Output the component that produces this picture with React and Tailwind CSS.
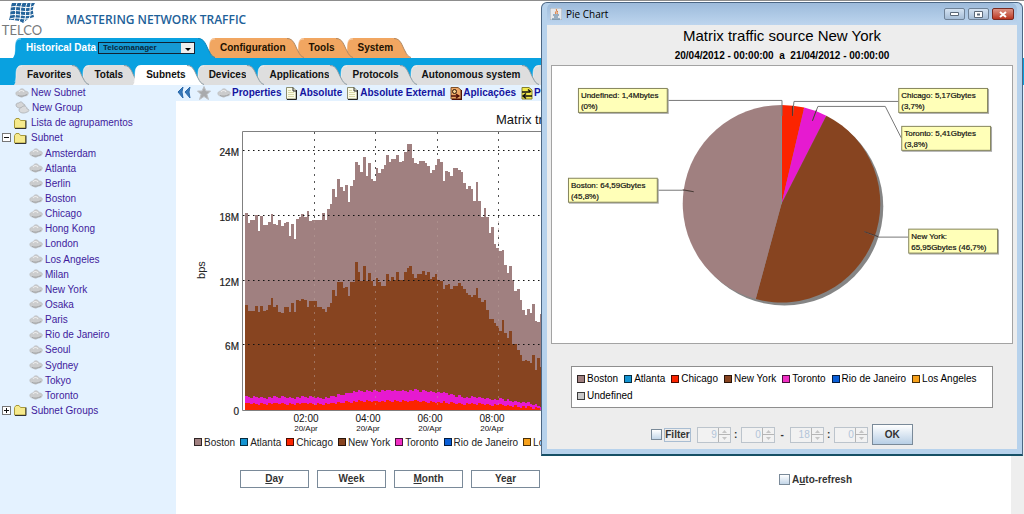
import { useState } from "react";

const menuTabs = [
  { label: "Configuration", z: "z-30" },
  { label: "Tools", z: "z-20" },
  { label: "System", z: "z-10" },
];

const sectionTabs = [
  { label: "Favorites", z: "z-30" },
  { label: "Totals", z: "z-20" },
  { label: "Subnets", z: "z-40" },
  { label: "Devices", z: "z-30" },
  { label: "Applications", z: "z-20" },
  { label: "Protocols", z: "z-10" },
  { label: "Autonomous system", z: "z-0" },
];

const subnets = [
  "Amsterdam", "Atlanta", "Berlin", "Boston", "Chicago", "Hong Kong", "London", "Los Angeles", "Milan",
  "New York", "Osaka", "Paris", "Rio de Janeiro", "Seoul", "Sydney", "Tokyo", "Toronto",
];

const series = [
  { name: "Boston", color: "bg-[#a08080]" },
  { name: "Atlanta", color: "bg-[#1494d2]" },
  { name: "Chicago", color: "bg-[#fb2400]" },
  { name: "New York", color: "bg-[#874420]" },
  { name: "Toronto", color: "bg-[#f02fc4]" },
  { name: "Rio de Janeiro", color: "bg-[#0a5fd8]" },
  { name: "Los Angeles", color: "bg-[#f7a11b]" },
];

// one sample every 5 minutes, measured down from the top of the plot
const bostonSamples = [
  279, 308, 300, 299, 285, 332, 288, 315, 315, 305, 282, 312, 315, 300, 318, 308, 305, 348, 312, 356,
  297, 292, 282, 290, 273, 303, 300, 299, 299, 299, 279, 300, 268, 252, 208, 232, 177, 200, 213, 195,
  247, 198, 180, 126, 136, 157, 110, 167, 128, 178, 183, 143, 160, 147, 135, 104, 126, 118, 116, 104,
  126, 123, 96, 72, 72, 113, 130, 131, 123, 123, 130, 138, 158, 150, 135, 118, 126, 183, 153, 157,
  167, 144, 144, 149, 155, 190, 208, 198, 206, 242, 185, 242, 290, 265, 292, 340, 320, 372, 385, 392,
  390, 435, 458, 438, 480, 513, 508, 540, 570, 585, 567, 578, 552, 603, 605, 582,
];

const newYorkSamples = [
  555, 572, 573, 573, 558, 575, 557, 573, 571, 555, 533, 562, 556, 575, 578, 560, 560, 577, 548, 577,
  540, 542, 537, 540, 560, 543, 543, 543, 560, 560, 566, 576, 560, 549, 510, 527, 487, 487, 503, 500,
  527, 487, 487, 425, 455, 482, 438, 482, 460, 482, 497, 475, 487, 497, 497, 461, 482, 470, 479, 457,
  479, 479, 455, 445, 437, 461, 475, 463, 463, 452, 465, 457, 478, 472, 463, 480, 482, 508, 495, 492,
  506, 497, 497, 488, 497, 508, 520, 524, 532, 524, 503, 533, 545, 540, 570, 598, 598, 608, 618, 634,
  600, 640, 655, 632, 672, 673, 690, 705, 722, 720, 722, 728, 705, 750, 715, 740,
];

const torontoCurve = [[0, 832], [33, 832], [42, 814], [65, 811], [75, 816], [84, 830], [100, 839], [107, 846], [115, 858]];
const chicagoCurve = [[0, 851], [33, 851], [42, 844], [65, 843], [75, 847], [84, 851], [100, 855], [107, 860], [115, 866]];

const interpolate = (curve) =>
  bostonSamples.map((_, i) => {
    const next = Math.max(1, curve.findIndex(([x]) => x >= i));
    const [x0, y0] = curve[next - 1];
    const [x1, y1] = curve[next];
    return y0 + ((y1 - y0) * (i - x0)) / (x1 - x0) + (((i * 37) % 11) - 5) * 0.7;
  });

const areaPath = (samples) => {
  let d = "M69 309";
  samples.forEach((v, i) => {
    const y = Math.round(19 + v / 3);
    d += `V${y}H${(69 + (i + 1) * 2.565).toFixed(1)}`;
  });
  return d + "V309Z";
};

const LeftCap = ({ fill }) => (
  <svg width="8" height="20" viewBox="0 0 8 20" className="block shrink-0">
    <path d="M0 20C2 17 2 14 2 9C2 3 4 0 8 0V20Z" fill={fill} />
    <path d="M1 17C2 14 2 12 2 9C2 3 4 1 8 1" fill="none" stroke="#fff" strokeOpacity="0.5" />
  </svg>
);

const RightCap = ({ fill, edge }) => (
  <svg width="18" height="20" viewBox="0 0 18 20" className="block shrink-0">
    <path d="M0 0C8 0 9 8 12 13C14 17 15 19 18 20H0Z" fill={fill} />
    <path d="M1 0.5C8 0.5 9 8 12 13C14 17 15 18.5 18 19.5" fill="none" stroke={edge} />
  </svg>
);

const Cloud = () => (
  <svg width="14" height="10" viewBox="0 0 14 10" className="shrink-0">
    <path d="M1 6C0 4 3 3 4 3C5 0 9 0 10 3C13 3 14 5 13 6C13 8 10 8 9 8C7 10 5 9 4 8C2 8 1 7 1 6Z" fill="#cbcccd" stroke="#b8babc" strokeWidth="0.6" />
    <path d="M4 4C5 2 8 2 9 4" fill="none" stroke="#ececec" strokeWidth="1.2" />
    <path d="M3 7.500C5 8.500 9 8.500 12 6.500" fill="none" stroke="#9fa1a3" />
  </svg>
);

const Clouds = () => (
  <svg width="15" height="13" viewBox="0 0 15 13" className="shrink-0">
    <path d="M1 4C1 2 3 2 4 2C5 0 8 1 8 3C11 3 10 6 8 6C6 8 1 7 1 4Z" fill="#d4d5d6" stroke="#a5a8ab" strokeWidth="0.7" />
    <path d="M4 9C4 7 6 7 7 6C9 4 12 5 12 8C15 8 14 11 12 11C9 13 4 12 4 9Z" fill="#d9dadb" stroke="#a5a8ab" strokeWidth="0.7" />
  </svg>
);

const Folder = () => (
  <svg width="13" height="12" viewBox="0 0 13 12" className="shrink-0">
    <path d="M0.5 3.5L2 1.5H5L6.5 3.5H11.5V11H0.5Z" fill="#f6ea8c" stroke="#a89a3a" />
    <path d="M12 3.5V11.5H1" fill="none" stroke="#333" />
  </svg>
);

const Page = () => (
  <svg width="11" height="13" viewBox="0 0 11 13" className="shrink-0">
    <path d="M0.5 0.5H7L10 3.5V12H0.5Z" fill="#fbfce8" stroke="#8d8f70" />
    <path d="M10.5 3V12.5H1M7 0.5V4H10" fill="none" stroke="#222" />
    <path d="M2 3.5H5M2 5.5H8M2 7.5H8M2 9.5H8" stroke="#d9d9a8" />
  </svg>
);

const AppIcon = () => (
  <svg width="12" height="13" viewBox="0 0 12 13" className="shrink-0">
    <path d="M1 0.5H8L11 3V12H1Z" fill="#eea765" stroke="#805028" />
    <circle cx="4.500" cy="4.500" r="2" fill="#f7d090" stroke="#2b1608" />
    <path d="M1 9H8M6 7L9 9L6 11M11.500 3V12.500H2" fill="none" stroke="#501008" strokeWidth="1.3" />
  </svg>
);

const SwapIcon = () => (
  <svg width="12" height="13" viewBox="0 0 12 13" className="shrink-0">
    <path d="M1 0.5H8L11 3V12H1Z" fill="#f3ea4c" stroke="#86802a" />
    <path d="M1 5H9M7 2.500L10 5M11 9H3M5 6.500L2 9L5 11.500" fill="none" stroke="#111" strokeWidth="1.5" />
  </svg>
);

const Legend = ({ items }) =>
  items.map(({ name, color }) => (
    <span key={name} className="flex items-center gap-[2px] whitespace-nowrap">
      <span className={`size-2 border border-black/70 ${color}`} />
      {name}
    </span>
  ));

const Logo = () => (
  <div className="flex w-10 flex-col items-center font-['Lato',sans-serif] text-[13px] leading-[15px] text-[#77797b]">
    <svg width="27" height="20" viewBox="0 0 27 20">
      <path d="M3 0H26C23 5 24 9 25 14C20 15 17 17 14 20C10 17 5 17 0 17C2 12 1 5 3 0Z" fill="#25649b" />
      <path d="M8 0C5 7 8 12 5 18M13 0C10 7 13 12 10 19M18 0C15 7 18 12 15 19M22 0C20 7 22 12 20 17M2 4C10 2 17 7 25 3M1 8C10 6 17 11 24 7M1 12C10 10 17 15 25 11M1 16C10 13 16 18 21 15" fill="none" stroke="#fff" strokeWidth="1" />
    </svg>
    TELCO
  </div>
);

const Header = () => (
  <header className="border-t border-[#8d8d8d]">
    <div className="flex h-[37px] items-start gap-6 pl-[2px] pt-[2px]">
      <Logo />
      <h1 className="pt-[9px] font-['Open_Sans',sans-serif] text-[12px] font-semibold leading-4 text-[#1d6199]">
        MASTERING NETWORK TRAFFIC
      </h1>
    </div>
    <nav className="relative z-10 flex h-5 pl-[13px] text-[10px] font-bold leading-5">
      <div className="relative z-40 flex text-white">
        <LeftCap fill="#09a1e0" />
        <div className="flex items-center gap-[2px] bg-[#09a1e0] pl-[5px]">
          <label htmlFor="source" className="whitespace-nowrap">Historical Data</label>
          <span className="relative flex">
            <select
              id="source"
              className="h-3 w-[97px] appearance-none border border-[#123] bg-[#1699d3] pl-1 text-[8px] font-bold leading-[10px] text-[#06263b]"
            >
              <option>Telcomanager</option>
            </select>
            <svg width="13" height="10" viewBox="0 0 13 10" className="pointer-events-none absolute right-px top-px">
              <path d="M0 0H13V10H0Z" fill="#eee" />
              <path d="M4 5H10L7 8Z" fill="#000" />
            </svg>
          </span>
        </div>
        <span className="w-[2px] bg-[#09a1e0]" />
        <RightCap fill="#09a1e0" edge="#0b86bd" />
      </div>
      {menuTabs.map(({ label, z }) => (
        <button key={label} type="button" className={`relative -ml-2 flex text-[#221100] ${z}`}>
          <LeftCap fill="#f1a661" />
          <span className="bg-[#f1a661] pl-[5px]">{label}</span>
          <RightCap fill="#f1a661" edge="#b08862" />
        </button>
      ))}
    </nav>
    <nav className="flex h-[27px] items-end overflow-hidden bg-[#09a1e0] pl-[14px] text-[10px] font-bold leading-5">
      {sectionTabs.map(({ label, z }, i) => {
        const active = label === "Subnets";
        const fill = active ? "#ffffff" : "#dedede";
        return (
          <button key={label} type="button" className={`relative flex whitespace-nowrap text-[#111] ${z} ${i ? "-ml-2" : ""}`}>
            <LeftCap fill={fill} />
            <span className={`pl-[5px] ${active ? "bg-white" : "bg-[#dedede]"}`}>{label}</span>
            <RightCap fill={fill} edge="#8c9ba3" />
          </button>
        );
      })}
      <span className="-ml-2 flex"><LeftCap fill="#dedede" /><span className="w-20 bg-[#dedede]" /></span>
    </nav>
  </header>
);

const Expander = ({ open }) => (
  <button type="button" aria-label={open ? "Collapse" : "Expand"} className="size-[9px] border border-[#777] bg-white">
    <svg width="7" height="7" viewBox="0 0 7 7" className="block">
      <path d={open ? "M1 3.500H6" : "M1 3.500H6M3.500 1V6"} stroke="#111" />
    </svg>
  </button>
);

const Sidebar = () => (
  <aside className="w-44 shrink-0 bg-[#e4f2ff] text-[10px] leading-[15px] text-[#3f1b9c]">
    <ul className="grid h-[333px] auto-rows-fr items-center">
      <li><a href="#new-subnet" className="flex items-center gap-[2px] pl-[15px]"><Cloud />New Subnet</a></li>
      <li><a href="#new-group" className="flex items-center gap-[2px] pl-[15px]"><Clouds />New Group</a></li>
      <li><a href="#lists" className="flex items-center gap-1 pl-[14px]"><Folder />Lista de agrupamentos</a></li>
      <li className="flex items-center gap-[3px] pl-[2px]">
        <Expander open />
        <a href="#subnet" className="flex items-center gap-1"><Folder />Subnet</a>
      </li>
      {subnets.map((name) => (
        <li key={name}><a href="#subnet" className="flex items-center gap-[2px] pl-[29px]"><Cloud />{name}</a></li>
      ))}
      <li className="flex items-center gap-[3px] pl-[2px]">
        <Expander />
        <a href="#groups" className="flex items-center gap-1"><Folder />Subnet Groups</a>
      </li>
    </ul>
  </aside>
);

const Toolbar = () => (
  <div className="flex h-4 items-center gap-[5px] overflow-hidden bg-[#e4f2ff] pl-px text-[10px] font-bold leading-4 whitespace-nowrap text-[#1414a0]">
    <button type="button" aria-label="Hide menu">
      <svg width="15" height="12" viewBox="0 0 15 12" className="block">
        <path d="M6 0L1 5L6 11L5 5ZM13 0L8 5L13 11L12 5Z" fill="#3778b8" stroke="#2b69aa" />
      </svg>
    </button>
    <button type="button" aria-label="Add to favorites">
      <svg width="15" height="14" viewBox="0 0 15 14" className="block">
        <path d="M7 0.500L9 5H13.500L10 8.500L11.500 13.500L7 10.500L2.500 13.500L4 8.500L0.500 5H5Z" fill="#a9aaac" stroke="#bfc1c4" />
      </svg>
    </button>
    <a href="#properties" className="flex items-center gap-px"><Cloud />Properties</a>
    <a href="#absolute" className="flex items-center gap-[2px]"><Page />Absolute</a>
    <a href="#external" className="flex items-center gap-[2px]"><Page />Absolute External</a>
    <a href="#apps" className="flex items-center gap-px"><AppIcon />Aplicações</a>
    <a href="#planning" className="flex items-center gap-px"><SwapIcon />Pl</a>
  </div>
);

const TrafficChart = () => (
  <svg className="block h-[333px] w-full" role="img" aria-label="Traffic by subnet">
    <text x="320" y="23" fontSize="13" fill="#111">Matrix traffic source New York</text>
    <g stroke="#555" strokeDasharray="2 5">
      {[138, 199, 261, 322].map((x) => <path key={x} d={`M${x}.5 31V309`} />)}
    </g>
    <path d={areaPath(bostonSamples)} fill="#a08080" shapeRendering="crispEdges" />
    <path d={areaPath(newYorkSamples)} fill="#874420" shapeRendering="crispEdges" />
    <path d={areaPath(interpolate(torontoCurve))} fill="#e61ad0" shapeRendering="crispEdges" />
    <path d={areaPath(interpolate(chicagoCurve))} fill="#fb2400" shapeRendering="crispEdges" />
    <g stroke="#b9a09a" strokeOpacity="0.5" strokeDasharray="2 5">
      {[138, 199, 261, 322].map((x) => <path key={x} d={`M${x}.5 120V309`} />)}
    </g>
    <g stroke="#111" strokeDasharray="1.5 3.5">
      {[49, 114, 179, 243].map((y) => <path key={y} d={`M67 ${y}.5H370`} />)}
    </g>
    <path d="M370 30.500H66.500V309.500H370" fill="none" stroke="#808080" />
    <g fontSize="10" fill="#222" textAnchor="end" stroke="#222" strokeWidth="0.2">
      <text x="63" y="55">24M</text>
      <text x="63" y="120">18M</text>
      <text x="63" y="185">12M</text>
      <text x="63" y="249">6M</text>
      <text x="63" y="314">0</text>
    </g>
    <text transform="translate(29 169) rotate(-90)" fontSize="11" fill="#222" textAnchor="middle">bps</text>
    <g fill="#111" textAnchor="middle">
      {["02:00", "04:00", "06:00", "08:00"].map((time, i) => (
        <g key={time}>
          <text x={130 + i * 62} y="321" fontSize="10">{time}</text>
          <text x={130 + i * 62} y="330" fontSize="8">20/Apr</text>
        </g>
      ))}
    </g>
  </svg>
);

const periods = [["", "D", "ay"], ["W", "e", "ek"], ["", "M", "onth"], ["Ye", "a", "r"]];

const pieLabels = [
  { x: 26, y: 22, lines: ["Undefined: 1,4Mbytes", "(0%)"] },
  { x: 347, y: 22, lines: ["Chicago: 5,17Gbytes", "(3,7%)"] },
  { x: 350, y: 60, lines: ["Toronto: 5,41Gbytes", "(3,8%)"] },
  { x: 357, y: 163, lines: ["New York:", "65,95Gbytes (46,7%)"] },
  { x: 16, y: 112, lines: ["Boston: 64,59Gbytes", "(45,8%)"] },
];

const pieSlices = [
  { from: 0, to: 0.037, color: "#fb2400" },
  { from: 0.037, to: 0.075, color: "#e61ad0" },
  { from: 0.075, to: 0.542, color: "#874420" },
  { from: 0.542, to: 1, color: "#a08080" },
];

const slicePath = ({ from, to }) => {
  const point = (t) => `${(230 + 99 * Math.sin(t * 2 * Math.PI)).toFixed(2)} ${(138 - 99 * Math.cos(t * 2 * Math.PI)).toFixed(2)}`;
  return `M230 138L${point(from)}A99 99 0 0 1 ${point(to)}Z`;
};

const PieChart = () => (
  <svg viewBox="0 0 461 278" className="block w-full" role="img" aria-label="Traffic share by subnet">
    <circle cx="233" cy="141" r="99" fill="#858585" />
    {pieSlices.map((slice) => <path key={slice.color} d={slicePath(slice)} fill={slice.color} />)}
    <path d="M230 39V138" stroke="#8d8d8d" />
    <g fill="none" stroke="#777">
      <path d="M115 34.500H230.500V50" />
      <path d="M347 35.500H242.500L241 50" />
      <path d="M350 72L334 40.500H266.500L261 55" />
      <path d="M357 171.500H327L313 166" />
      <path d="M105 124.500H131L142 126" />
    </g>
    <path d="M327 171L313 166M131 124L142 126M241 40V50M265 44L261 55" stroke="#3a2018" strokeOpacity="0.7" />
    {pieLabels.map(({ x, y, lines }) => (
      <g key={lines[0]}>
        <rect x={x + 1} y={y + 1} width="90" height="25" fill="#aaa" />
        <rect x={x + 0.5} y={y + 0.5} width="89" height="24" fill="#ffffb8" stroke="#85855c" />
        <text x={x + 3} y={y + 10} fontSize="8" fill="#111" stroke="#111" strokeWidth="0.2">{lines[0]}</text>
        <text x={x + 3} y={y + 21} fontSize="8" fill="#111" stroke="#111" strokeWidth="0.2">{lines[1]}</text>
      </g>
    ))}
  </svg>
);

const TimeSpinner = ({ label, value }) => (
  <span className="flex h-4 w-[34px] border border-[#bcc4cc] bg-[#f2f2f2]">
    <input aria-label={label} defaultValue={value} disabled className="w-5 pr-px text-right text-[10px] font-normal leading-[14px] text-[#b3c5d9]" />
    <span className="flex flex-1 flex-col border-l border-[#b5b5b5]">
      <button type="button" disabled aria-label={`${label} up`} className="flex flex-1 items-center justify-center border-b border-[#b5b5b5]">
        <svg width="5" height="3" viewBox="0 0 5 3"><path d="M0 3L2.500 0L5 3Z" fill="#c5c5c5" /></svg>
      </button>
      <button type="button" disabled aria-label={`${label} down`} className="flex flex-1 items-center justify-center">
        <svg width="5" height="3" viewBox="0 0 5 3"><path d="M0 0L2.500 3L5 0Z" fill="#c5c5c5" /></svg>
      </button>
    </span>
  </span>
);

const checkboxStyles = "size-[11px] appearance-none border border-[#7a8a99] bg-gradient-to-b from-white to-[#c3d6e8] checked:from-[#5f87ad]";
const captionBtnStyles = "flex h-3 w-[21px] items-center justify-center rounded-xs border border-[#6f8297] bg-gradient-to-b from-[#d5e3f2] to-[#a5bdd7]";

const PieWindow = () => {
  const [filter, setFilter] = useState(false);

  return (
    <section className="absolute right-px top-[2px] z-50 w-[482px] rounded-t-md border border-[#4c6784] border-b-2 border-b-[#165066] bg-[#b7d2ec] px-[5px] pb-[5px] text-black">
      <div className="flex h-[22px] items-center gap-1 rounded-t-md bg-gradient-to-b from-[#9dbbdb] to-[#bdd5ee] px-[3px] text-[10px]">
        <svg width="12" height="12" viewBox="0 0 12 12">
          <path d="M0 0H12V12H0Z" fill="#e6e9ed" stroke="#9da9b5" />
          <path d="M6 1C8 3 4 4 6 6M8 3C6 4 8 5 7 6" fill="none" stroke="#dd6a1e" />
          <path d="M3 7H9M4 9H8M2 11H10" stroke="#4b7394" />
        </svg>
        <h2 className="flex-1 font-['Open_Sans',sans-serif] leading-4">Pie Chart</h2>
        <div className="flex gap-[3px]">
          <button type="button" aria-label="Minimize" className={captionBtnStyles}>
            <svg width="9" height="4" viewBox="0 0 9 4"><path d="M0.500 0.500H8.500V3.500H0.500Z" fill="#fff" stroke="#5a6878" /></svg>
          </button>
          <button type="button" aria-label="Maximize" className={captionBtnStyles}>
            <svg width="9" height="7" viewBox="0 0 9 7"><path d="M0.500 0.500H8.500V6.500H0.500Z" fill="#fff" stroke="#5a6878" /><path d="M3 3.500H6" stroke="#5a6878" strokeWidth="2" /></svg>
          </button>
          <button type="button" aria-label="Close" className="flex h-3 w-[22px] items-center justify-center rounded-xs border border-[#792a20] bg-gradient-to-b from-[#dd9385] to-[#b9331e]">
            <svg width="8" height="7" viewBox="0 0 8 7"><path d="M1 1L7 6M7 1L1 6" stroke="#fff" strokeWidth="2" /></svg>
          </button>
        </div>
      </div>
      <div className="bg-[#ededed] px-1 pb-1">
        <h3 className="pt-px text-center text-[15px] leading-5">Matrix traffic source New York</h3>
        <p className="whitespace-pre pt-[3px] pb-[2px] text-center text-[10px] font-bold leading-[14px]">20/04/2012 - 00:00:00  a  21/04/2012 - 00:00:00</p>
        <div className="border border-[#a3a3a3] bg-white">
          <PieChart />
        </div>
        <div className="mx-5 mt-[22px] flex flex-wrap gap-x-[6px] border border-[#8e8e8e] bg-white px-[5px] py-[3px] text-[10px] leading-[17px]">
          <Legend items={[...series, { name: "Undefined", color: "bg-[#c8c8c8]" }]} />
        </div>
        <div className="mt-4 flex items-center justify-center text-[10px] font-bold text-[#333]">
          <input
            id="filter"
            type="checkbox"
            checked={filter}
            onChange={() => setFilter(!filter)}
            className={checkboxStyles}
          />
          <label htmlFor="filter" className="ml-[2px] mr-[6px] border border-[#a9bdd2] leading-3">Filter</label>
          <TimeSpinner label="From hour" value="9" />
          <span className="w-[10px] text-center">:</span>
          <TimeSpinner label="From minute" value="0" />
          <span className="w-[15px] text-center">-</span>
          <TimeSpinner label="To hour" value="18" />
          <span className="w-[10px] text-center">:</span>
          <TimeSpinner label="To minute" value="0" />
          <button type="button" className="ml-1 h-[21px] w-[41px] border border-[#7a8a99] bg-gradient-to-b from-white to-[#b8cfe5]">OK</button>
        </div>
      </div>
    </section>
  );
};

const App = () => {
  const [autoRefresh, setAutoRefresh] = useState(false);

  return (
    <div className="relative flex min-h-screen flex-col overflow-hidden bg-white font-['Liberation_Sans',Arial,sans-serif]">
      <Header />
      <div className="flex flex-1">
        <Sidebar />
        <main className="flex min-w-0 flex-1 flex-col">
          <Toolbar />
          <div className="flex flex-1">
            <div className="min-w-0 flex-1">
              <TrafficChart />
              <div className="flex h-4 items-center gap-[5px] pl-[18px] text-[10px] text-[#222]">
                <Legend items={series} />
              </div>
              <div className="mt-5 flex items-center gap-2 pl-16 text-[10px] font-bold text-[#333]">
                {periods.map(([before, key, after]) => (
                  <button key={before + key + after} type="button" className="h-[18px] w-[69px] border border-[#7a8a99] bg-white leading-4">
                    {before}<u>{key}</u>{after}
                  </button>
                ))}
                <label className="ml-[231px] flex items-center gap-[2px] whitespace-nowrap">
                  <input
                    type="checkbox"
                    checked={autoRefresh}
                    onChange={() => setAutoRefresh(!autoRefresh)}
                    className={checkboxStyles}
                  />
                  <span>A<u>u</u>to-refresh</span>
                </label>
              </div>
            </div>
            <div className="w-[13px] bg-[#eeeeee]" />
          </div>
        </main>
      </div>
      <PieWindow />
    </div>
  );
};

export default App;
